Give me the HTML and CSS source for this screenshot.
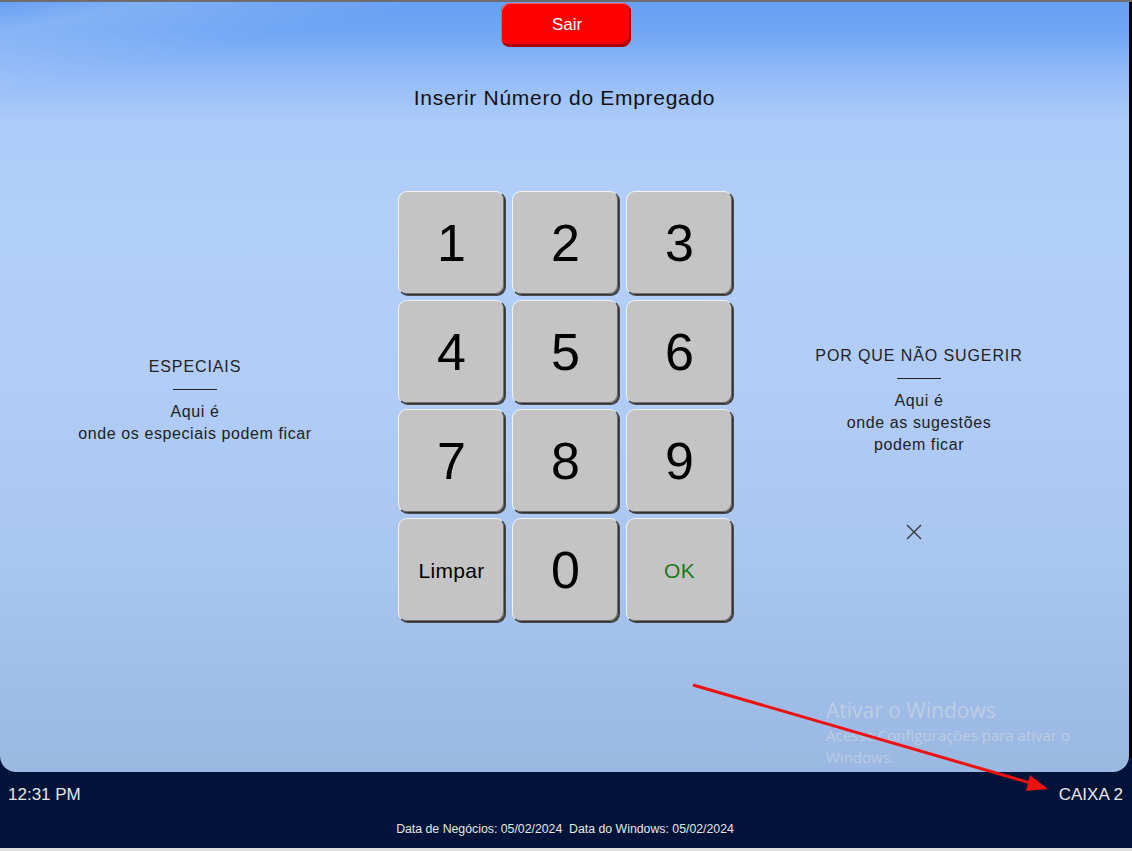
FILE: index.html
```html
<!DOCTYPE html>
<html lang="pt">
<head>
<meta charset="utf-8">
<title>Inserir Número do Empregado</title>
<link rel="stylesheet" href="styles.css">
</head>
<body>
<div class="screen">
  <div class="top-strip"></div>
  <main class="panel">
    <button class="exit-btn">Sair</button>
    <h1 class="title">Inserir Número do Empregado</h1>
    <div class="content">
      <section class="side side-left">
        <h2 class="side-title">ESPECIAIS</h2>
        <div class="rule"></div>
        <p class="side-text">Aqui é<br>onde os especiais podem ficar</p>
      </section>
      <div class="keypad">
        <button class="key">1</button>
        <button class="key">2</button>
        <button class="key">3</button>
        <button class="key">4</button>
        <button class="key">5</button>
        <button class="key">6</button>
        <button class="key">7</button>
        <button class="key">8</button>
        <button class="key">9</button>
        <button class="key key-text">Limpar</button>
        <button class="key">0</button>
        <button class="key key-text key-ok">OK</button>
      </div>
      <section class="side side-right">
        <h2 class="side-title">POR QUE NÃO SUGERIR</h2>
        <div class="rule"></div>
        <p class="side-text">Aqui é<br>onde as sugestões<br>podem ficar</p>
        <svg class="close-x" width="16" height="16" viewBox="0 0 16 16"><path d="M1 1 L15 15 M15 1 L1 15" stroke="#333" stroke-width="1.3" fill="none"/></svg>
      </section>
    </div>
  </main>
  <footer class="footer">
    <div class="footer-row">
      <span class="clock">12:31 PM</span>
      <span class="station">CAIXA 2</span>
    </div>
    <div class="dates">Data de Negócios: 05/02/2024&nbsp;&nbsp;Data do Windows: 05/02/2024</div>
  </footer>
  <div class="bottom-strip"></div>

  <div class="watermark">
    <div class="wm-title">Ativar o Windows</div>
    <div class="wm-text">Acesse Configurações para ativar o<br>Windows.</div>
  </div>
  <svg class="annotation" width="1132" height="851" viewBox="0 0 1132 851">
    <line x1="693" y1="685" x2="1034" y2="784" stroke="#ee1111" stroke-width="3"/>
    <polygon points="1048,789 1030,775 1026,791" fill="#ee1111"/>
  </svg>
</div>
</body>
</html>
```

FILE: styles.css
```css
* { box-sizing: border-box; }
html, body { margin: 0; padding: 0; }
body {
  font-family: "Liberation Sans", Arial, sans-serif;
  background: #dcdcdc;
}
.screen {
  position: relative;
  width: 1132px;
  height: 851px;
  display: flex;
  flex-direction: column;
  background: #011339;
  overflow: hidden;
}
.top-strip {
  height: 2px;
  background: #6d6d6d;
  flex: none;
}
.panel {
  flex: none;
  height: 770px;
  margin-right: 3px;
  border-radius: 0 0 16px 16px;
  background:
    linear-gradient(168deg, rgba(255,255,255,0) 0px, rgba(255,255,255,0.16) 30px, rgba(255,255,255,0) 90px, rgba(255,255,255,0) 100%),
    linear-gradient(to bottom, #68a0f2 0px, #70a6f5 30px, #94bcf8 75px, #adcbf9 120px, #b2cff9 220px, #b1cdf7 380px, #a9c6f0 560px, #9fbce6 700px, #9bb8e1 770px);
  display: flex;
  flex-direction: column;
  align-items: center;
  position: relative;
}
.panel::after {
  content: "";
  position: absolute;
  right: -3px;
  top: 0;
  width: 3px;
  height: 756px;
  background: #000;
}
.exit-btn {
  margin-top: 1px;
  margin-left: 3px;
  width: 130px;
  height: 44px;
  border: none;
  border-radius: 9px;
  background: #ff0000;
  color: #fff;
  font-family: "Liberation Sans", Arial, sans-serif;
  font-size: 17px;
  box-shadow: inset -2px -3px 0 #a80000, inset 1px 1px 0 #ff5a5a;
  padding: 0 0 0 2px;
}
.title {
  margin: 39px 0 0;
  font-size: 21px;
  font-weight: normal;
  line-height: 24px;
  letter-spacing: 0.7px;
  color: #111;
}
.content {
  margin-top: 81px;
  width: 100%;
  display: flex;
  align-items: flex-start;
}
.side {
  display: flex;
  flex-direction: column;
  align-items: center;
  text-align: center;
  color: #222;
}
.side-left {
  width: 398px;
  padding-right: 8px;
  padding-top: 166px;
}
.side-right {
  width: 370px;
  margin-left: 1px;
  padding-top: 155px;
}
.side-title {
  margin: 0;
  font-size: 16px;
  font-weight: normal;
  line-height: 20px;
  letter-spacing: 0.9px;
}
.rule {
  width: 44px;
  height: 1px;
  background: #222;
  margin: 12px 0 11px;
}
.side-text {
  margin: 0;
  font-size: 16px;
  line-height: 22px;
  letter-spacing: 0.6px;
}
.close-x {
  margin-top: 68px;
  margin-right: 10px;
}
.keypad {
  display: grid;
  grid-template-columns: repeat(3, 107px);
  grid-auto-rows: 104px;
  column-gap: 7px;
  row-gap: 5px;
}
.key {
  border: 1px solid;
  border-color: #f2f2f2 #333 #333 #f2f2f2;
  border-radius: 9px;
  background: #c4c4c4;
  box-shadow: 1px 1px 0 #4a4a4a, inset -1px -1px 0 #707070;
  font-family: "Liberation Sans", Arial, sans-serif;
  font-size: 52px;
  color: #000;
  padding: 0;
  line-height: 1;
}
.key-text {
  font-size: 21px;
  letter-spacing: 0.3px;
}
.key-ok {
  color: #1c7a1c;
}
.footer {
  flex: none;
  height: 76px;
  display: flex;
  flex-direction: column;
  color: #e6e6e6;
  font-family: "Liberation Sans", Arial, sans-serif;
}
.footer-row {
  display: flex;
  justify-content: space-between;
  align-items: center;
  height: 46px;
  padding: 0 9px 0 8px;
  font-size: 17px;
}
.dates {
  text-align: center;
  font-size: 12.3px;
  line-height: 22px;
  padding-right: 2px;
}
.bottom-strip {
  flex: 1;
  background: #dedede;
}
.watermark {
  position: absolute;
  left: 826px;
  top: 697px;
  color: rgba(215, 220, 230, 0.55);
  font-family: "Open Sans", "Noto Sans", sans-serif;
}
.wm-title {
  font-size: 21px;
  line-height: 27px;
}
.wm-text {
  font-size: 15px;
  line-height: 22px;
}
.annotation {
  position: absolute;
  left: 0;
  top: 0;
  pointer-events: none;
}
```
